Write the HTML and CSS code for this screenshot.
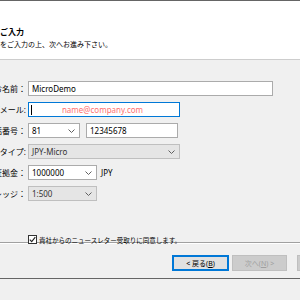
FILE: index.html
```html
<!DOCTYPE html>
<html lang="ja">

<head>
    <meta charset="UTF-8">
    <title>口座開設</title>
    <link rel="stylesheet" href="styles.css">
</head>

<body>
    <div class="edge"></div>
    <header class="head">
        <p class="head-title">ご入力</p>
        <p class="head-sub">をご入力の上、次へお進み下さい。</p>
    </header>
    <main class="form">
        <div class="row">
            <div class="lbl"><span>お名前：</span></div>
            <div class="box w-full">MicroDemo</div>
        </div>
        <div class="row">
            <div class="lbl"><span>Eメール:</span></div>
            <div class="box focus w-mid">
                <span class="caret"></span>
                <span class="hint">name@company.com</span>
            </div>
        </div>
        <div class="row">
            <div class="lbl"><span>電話番号：</span></div>
            <div class="box combo w-code">
                <span>81</span>
                <svg class="chev" width="7" height="4" viewBox="0 0 7 4"><polyline points="0.5,0.5 3.5,3.5 6.5,0.5" /></svg>
            </div>
            <div class="box w-tel">12345678</div>
        </div>
        <div class="row group">
            <div class="lbl"><span>口座タイプ:</span></div>
            <div class="box combo off w-mid">
                <span>JPY-Micro</span>
                <svg class="chev" width="7" height="4" viewBox="0 0 7 4"><polyline points="0.5,0.5 3.5,3.5 6.5,0.5" /></svg>
            </div>
        </div>
        <div class="row step">
            <div class="lbl"><span>証拠金：</span></div>
            <div class="box combo w-small">
                <span>1000000</span>
                <svg class="chev" width="7" height="4" viewBox="0 0 7 4"><polyline points="0.5,0.5 3.5,3.5 6.5,0.5" /></svg>
            </div>
            <span class="unit">JPY</span>
        </div>
        <div class="row">
            <div class="lbl"><span>レバレッジ：</span></div>
            <div class="box combo off w-small">
                <span>1:500</span>
                <svg class="chev" width="7" height="4" viewBox="0 0 7 4"><polyline points="0.5,0.5 3.5,3.5 6.5,0.5" /></svg>
            </div>
        </div>
        <div class="agree">
            <span class="check">
                <svg width="7" height="7" viewBox="0 0 7 7"><polyline points="0.8,3.6 2.7,5.6 6.3,1.2" /></svg>
            </span>
            <span>貴社からのニュースレター受取りに同意します。</span>
        </div>
    </main>
    <footer class="foot">
        <button class="btn focus">&lt; 戻る(<u>B</u>)</button>
        <button class="btn" disabled>次へ(<u>N</u>) &gt;</button>
        <button class="btn" disabled>キャンセル</button>
    </footer>
    <div class="edge"></div>
</body>

</html>
```

FILE: styles.css
```css
body {
    margin: 0;
    width: 300px;
    height: 300px;
    overflow: hidden;
    background: #F0F0F0;
    font-family: "Noto Sans", "Noto Sans CJK JP", sans-serif;
    color: #000;
}

.edge {
    height: 1px;
    background: #656565;
}

.head {
    height: 58px;
    background: white;
    border-bottom: 1px solid #CDCDCD;
    padding-top: 26px;
    box-sizing: border-box;
    height: 59px;
}

.head p {
    margin: 0;
    white-space: nowrap;
}

.head-title {
    font-size: 8px;
    font-weight: bold;
    line-height: 10px;
}

.head-sub {
    font-size: 7px;
    line-height: 9px;
    margin-top: 3px !important;
}

.form {
    padding-top: 21px;
    height: 183px;
    box-sizing: border-box;
    border-bottom: 1px solid #A0A0A0;
    box-shadow: 0 1px 0 white;
}

.row {
    display: flex;
    align-items: center;
    height: 15px;
    margin-bottom: 6px;
}

.row.group {
    margin-top: 5px;
}

.row.step {
    margin-top: 1px;
}

.lbl {
    width: 26px;
    flex: none;
    display: flex;
    justify-content: flex-end;
    white-space: nowrap;
    font-size: 8px;
    margin-right: 2px;
}

.box {
    height: 15px;
    box-sizing: border-box;
    border: 1px solid #ABABAB;
    background: white;
    font-size: 8px;
    line-height: 13px;
    padding-left: 3px;
    display: flex;
    align-items: center;
    white-space: nowrap;
}

.box.focus {
    border-color: #0078D7;
    padding-left: 2px;
}

.caret {
    width: 1px;
    height: 10px;
    background: #000;
    flex: none;
}

.hint {
    flex: 1;
    text-align: center;
    color: #FF7070;
    padding-right: 6px;
}

.combo {
    justify-content: space-between;
    padding-right: 4px;
}

.combo.off {
    background: #E5E5E5;
    border-color: #BFBFBF;
    color: #333;
}

.chev {
    fill: none;
    stroke: #606060;
    stroke-width: 1;
}

.w-full {
    width: 245px;
}

.w-mid {
    width: 152px;
}

.w-code {
    width: 52px;
}

.w-tel {
    width: 92px;
    margin-left: 6px;
}

.w-small {
    width: 69px;
}

.unit {
    font-size: 8px;
    margin-left: 4px;
}

.agree {
    display: flex;
    align-items: center;
    margin: 34px 0 0 28px;
    height: 9px;
    font-size: 6.5px;
    white-space: nowrap;
}

.check {
    width: 9px;
    height: 9px;
    box-sizing: border-box;
    border: 1px solid #333;
    background: white;
    display: flex;
    align-items: center;
    justify-content: center;
    margin-right: 2px;
    flex: none;
}

.check svg {
    fill: none;
    stroke: #222;
    stroke-width: 1.1;
}

.foot {
    height: 35px;
    box-sizing: border-box;
    padding: 12px 0 0 172px;
    display: flex;
    align-items: flex-start;
    gap: 3px;
    white-space: nowrap;
}

.btn {
    flex: none;
    width: 57px;
    height: 16px;
    padding: 0;
    border: 1px solid #ADADAD;
    background: #E1E1E1;
    font-family: "Noto Sans", "Noto Sans CJK JP", sans-serif;
    font-size: 7px;
    color: #000;
}

.btn.focus {
    border-color: #0078D7;
    box-shadow: inset 0 0 0 1px #0078D7;
}

.btn:disabled {
    width: 55px;
    background: #CCCCCC;
    border-color: #BFBFBF;
    color: #A0A0A0;
}

.btn:last-child {
    margin-left: 7px;
}
```
